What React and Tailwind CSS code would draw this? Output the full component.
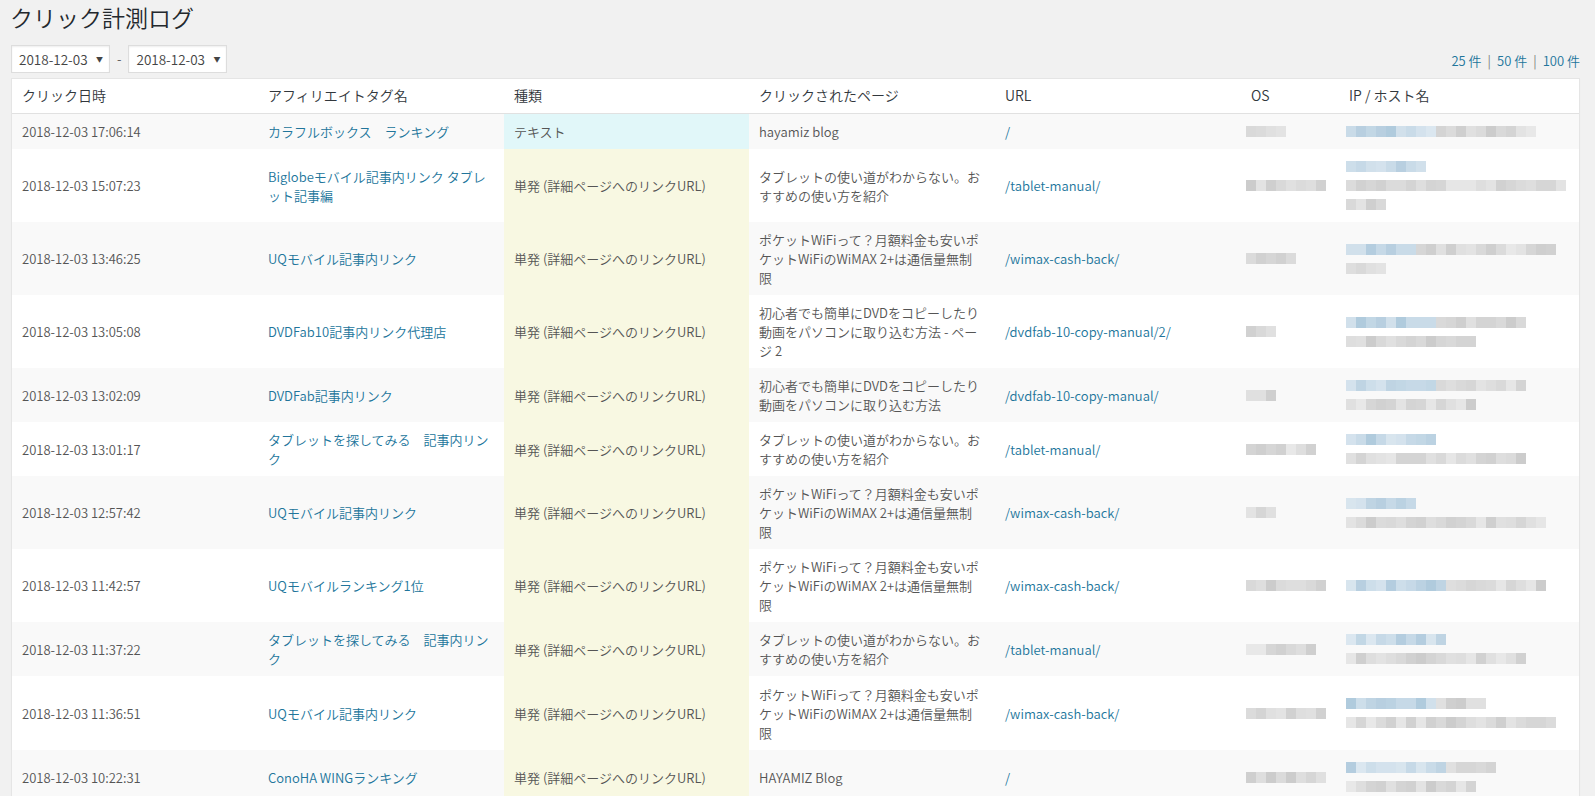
import React from "react";

const FONT = "font-['Noto_Sans_CJK_JP','Noto_Sans',sans-serif]";

function shades(seed, n, hue) {
  const out = [];
  let s = seed * 9301 + 49297;
  for (let i = 0; i < n; i++) {
    s = (s * 9301 + 49297) % 233280;
    const r = s / 233280;
    if (hue === "b") {
      const l = 78 + Math.round(r * 12);
      out.push(`hsl(205, 40%, ${l}%)`);
    } else {
      const l = 80 + Math.round(r * 11);
      out.push(`hsl(0, 0%, ${l}%)`);
    }
  }
  return out;
}

function Mosaic({ segs, seed }) {
  let k = 0;
  return (
    <div className="flex h-[19px] items-center">
      <div className="flex h-[11px] blur-[0.6px]">
        {segs.map(([hue, w], si) => {
          const n = Math.max(1, Math.round(w / 10));
          const cols = shades(seed * 31 + si * 7 + k++, n, hue);
          return cols.map((c, i) => (
            <div key={si + "-" + i} className="h-full" style={{ width: w / n, background: c }} />
          ));
        })}
      </div>
    </div>
  );
}

const rows = [
  {
    date: "2018-12-03 17:06:14",
    tag: "カラフルボックス　ランキング",
    type: "テキスト",
    cyan: true,
    page: "hayamiz blog",
    url: "/",
    h: "h-[36px]",
    os: [[["g", 40]]],
    ip: [[["b", 90], ["g", 100]]],
  },
  {
    date: "2018-12-03 15:07:23",
    tag: "Biglobeモバイル記事内リンク タブレット記事編",
    type: "単発 (詳細ページへのリンクURL)",
    page: "タブレットの使い道がわからない。おすすめの使い方を紹介",
    url: "/tablet-manual/",
    h: "h-[73px]",
    os: [[["g", 80]]],
    ip: [[["b", 80]], [["g", 220]], [["g", 40]]],
  },
  {
    date: "2018-12-03 13:46:25",
    tag: "UQモバイル記事内リンク",
    type: "単発 (詳細ページへのリンクURL)",
    page: "ポケットWiFiって？月額料金も安いポケットWiFiのWiMAX 2+は通信量無制限",
    url: "/wimax-cash-back/",
    h: "h-[73px]",
    os: [[["g", 50]]],
    ip: [[["b", 70], ["g", 140]], [["g", 40]]],
  },
  {
    date: "2018-12-03 13:05:08",
    tag: "DVDFab10記事内リンク代理店",
    type: "単発 (詳細ページへのリンクURL)",
    page: "初心者でも簡単にDVDをコピーしたり動画をパソコンに取り込む方法 - ページ 2",
    url: "/dvdfab-10-copy-manual/2/",
    h: "h-[73px]",
    os: [[["g", 30]]],
    ip: [[["b", 90], ["g", 90]], [["g", 130]]],
  },
  {
    date: "2018-12-03 13:02:09",
    tag: "DVDFab記事内リンク",
    type: "単発 (詳細ページへのリンクURL)",
    page: "初心者でも簡単にDVDをコピーしたり動画をパソコンに取り込む方法",
    url: "/dvdfab-10-copy-manual/",
    h: "h-[54px]",
    os: [[["g", 30]]],
    ip: [[["b", 90], ["g", 90]], [["g", 130]]],
  },
  {
    date: "2018-12-03 13:01:17",
    tag: "タブレットを探してみる　記事内リンク",
    type: "単発 (詳細ページへのリンクURL)",
    page: "タブレットの使い道がわからない。おすすめの使い方を紹介",
    url: "/tablet-manual/",
    h: "h-[54px]",
    os: [[["g", 70]]],
    ip: [[["b", 90]], [["g", 180]]],
  },
  {
    date: "2018-12-03 12:57:42",
    tag: "UQモバイル記事内リンク",
    type: "単発 (詳細ページへのリンクURL)",
    page: "ポケットWiFiって？月額料金も安いポケットWiFiのWiMAX 2+は通信量無制限",
    url: "/wimax-cash-back/",
    h: "h-[73px]",
    os: [[["g", 30]]],
    ip: [[["b", 70]], [["g", 200]]],
  },
  {
    date: "2018-12-03 11:42:57",
    tag: "UQモバイルランキング1位",
    type: "単発 (詳細ページへのリンクURL)",
    page: "ポケットWiFiって？月額料金も安いポケットWiFiのWiMAX 2+は通信量無制限",
    url: "/wimax-cash-back/",
    h: "h-[73px]",
    os: [[["g", 80]]],
    ip: [[["b", 100], ["g", 100]]],
  },
  {
    date: "2018-12-03 11:37:22",
    tag: "タブレットを探してみる　記事内リンク",
    type: "単発 (詳細ページへのリンクURL)",
    page: "タブレットの使い道がわからない。おすすめの使い方を紹介",
    url: "/tablet-manual/",
    h: "h-[54px]",
    os: [[["g", 70]]],
    ip: [[["b", 100]], [["g", 180]]],
  },
  {
    date: "2018-12-03 11:36:51",
    tag: "UQモバイル記事内リンク",
    type: "単発 (詳細ページへのリンクURL)",
    page: "ポケットWiFiって？月額料金も安いポケットWiFiのWiMAX 2+は通信量無制限",
    url: "/wimax-cash-back/",
    h: "h-[74px]",
    os: [[["g", 80]]],
    ip: [[["b", 90], ["g", 50]], [["g", 210]]],
  },
  {
    date: "2018-12-03 10:22:31",
    tag: "ConoHA WINGランキング",
    type: "単発 (詳細ページへのリンクURL)",
    page: "HAYAMIZ Blog",
    url: "/",
    h: "h-[54px]",
    os: [[["g", 80]]],
    ip: [[["b", 100], ["g", 50]], [["g", 130]]],
  },
];

function Select() {
  return (
    <div className="flex h-[28px] w-[99px] items-center justify-between border border-[#dddddd] bg-white pl-[7px] pr-[6px] text-[13.5px] text-[#444] shadow-[inset_0_1px_2px_rgba(0,0,0,0.07)]">
      <span>2018-12-03</span>
      <span className="text-[7px] text-[#444]">▼</span>
    </div>
  );
}

export default function App() {
  return (
    <div className={`min-h-[796px] w-full bg-[#f1f1f1] pl-[11px] pr-[15px] font-[350] ${FONT}`}>
      <h1 className="-ml-px pt-[3px] text-[23px] leading-[29px] font-[350] text-[#23282d]">クリック計測ログ</h1>
      <div className="mt-[13px] flex items-end justify-between">
        <div className="flex items-center">
          <Select />
          <span className="mx-[7px] text-[13px] text-[#555]">-</span>
          <Select />
        </div>
        <div className="pb-[3px] text-[13px] leading-[19px] text-[#21759b]">
          <span>25 件</span>
          <span className="mx-[6px] text-[#777]">|</span>
          <span>50 件</span>
          <span className="mx-[6px] text-[#777]">|</span>
          <span>100 件</span>
        </div>
      </div>
      <div className="mt-[5px] border border-[#e5e5e5] bg-white shadow-[0_1px_1px_rgba(0,0,0,0.04)]">
        <table className="w-full table-fixed border-collapse text-left">
          <colgroup>
            <col className="w-[246px]" />
            <col className="w-[246px]" />
            <col className="w-[245px]" />
            <col className="w-[246px]" />
            <col className="w-[246px]" />
            <col className="w-[98px]" />
            <col />
          </colgroup>
          <thead>
            <tr className="h-[34px] border-b border-[#e1e1e1]">
              {["クリック日時", "アフィリエイトタグ名", "種類", "クリックされたページ", "URL", "OS", "IP / ホスト名"].map((t) => (
                <th key={t} className="px-[10px] py-[7px] text-[14px] leading-[19px] font-[350] text-[#32373c]">
                  {t}
                </th>
              ))}
            </tr>
          </thead>
          <tbody>
            {rows.map((r, i) => (
              <tr key={i} className={`${r.h} ${i % 2 === 0 ? "bg-[#f9f9f9]" : "bg-white"}`}>
                <td className="px-[10px] py-[8px] align-middle text-[13px] leading-[19px] text-[#555]">{r.date}</td>
                <td className="px-[10px] py-[8px] align-middle text-[13px] leading-[19px] text-[#21759b]">{r.tag}</td>
                <td
                  className={`px-[10px] py-[8px] align-middle text-[13px] leading-[19px] text-[#555] ${
                    r.cyan ? "bg-[#e1f7f9]" : "bg-[#f8f8e2]"
                  }`}
                >
                  {r.type}
                </td>
                <td className="px-[10px] py-[8px] align-middle text-[13px] leading-[19px] text-[#555]">{r.page}</td>
                <td className="px-[10px] py-[8px] align-middle text-[13px] leading-[19px] text-[#21759b]">{r.url}</td>
                <td className="py-[8px] pl-[5px] pr-[10px] align-middle">
                  {r.os.map((l, j) => (
                    <Mosaic key={j} segs={l} seed={i * 5 + j + 3} />
                  ))}
                </td>
                <td className="px-[7px] py-[8px] align-middle">
                  {r.ip.map((l, j) => (
                    <Mosaic key={j} segs={l} seed={i * 11 + j + 1} />
                  ))}
                </td>
              </tr>
            ))}
          </tbody>
        </table>
      </div>
    </div>
  );
}
